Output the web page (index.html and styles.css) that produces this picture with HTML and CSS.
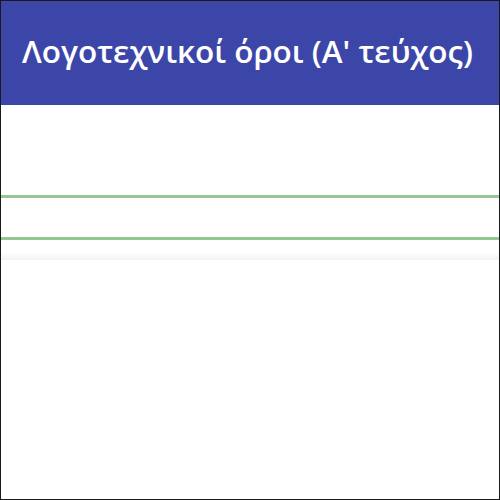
FILE: index.html
```html
<!DOCTYPE html>
<html lang="el">
<head>
<meta charset="utf-8">
<link rel="stylesheet" href="styles.css">
</head>
<body>
<div class="frame">
  <header class="topbar">
    <h1 class="title">Λογοτεχνικοί όροι (Α' τεύχος)</h1>
  </header>
  <main class="content">
    <div class="band">
      <div class="rule"></div>
      <div class="gap"></div>
      <div class="rule"></div>
    </div>
    <div class="shade"></div>
  </main>
</div>
</body>
</html>
```

FILE: styles.css
```css
html, body {
  margin: 0;
  padding: 0;
}
body {
  width: 500px;
  height: 500px;
  background: #ffffff;
  font-family: "Open Sans", "Noto Sans", "Liberation Sans", sans-serif;
}
.frame {
  box-sizing: border-box;
  width: 500px;
  height: 500px;
  border: 1px solid #1a1a1a;
  display: flex;
  flex-direction: column;
  overflow: hidden;
}
.topbar {
  height: 104px;
  background: #3c46a8;
  display: flex;
  align-items: center;
  padding-left: 21px;
  box-sizing: border-box;
  flex-shrink: 0;
}
.title {
  margin: 0;
  color: #ffffff;
  font-size: 31.5px;
  font-weight: 600;
  letter-spacing: 0;
  white-space: nowrap;
  position: relative;
  top: -3px;
}
.content {
  flex: 1;
  display: flex;
  flex-direction: column;
}
.band {
  margin-top: 90px;
  display: flex;
  flex-direction: column;
}
.rule {
  height: 3px;
  background: #92c992;
}
.gap {
  height: 39px;
}
.shade {
  margin-top: 12px;
  height: 8px;
  background: linear-gradient(#ffffff, #f3f3f3);
}
```
